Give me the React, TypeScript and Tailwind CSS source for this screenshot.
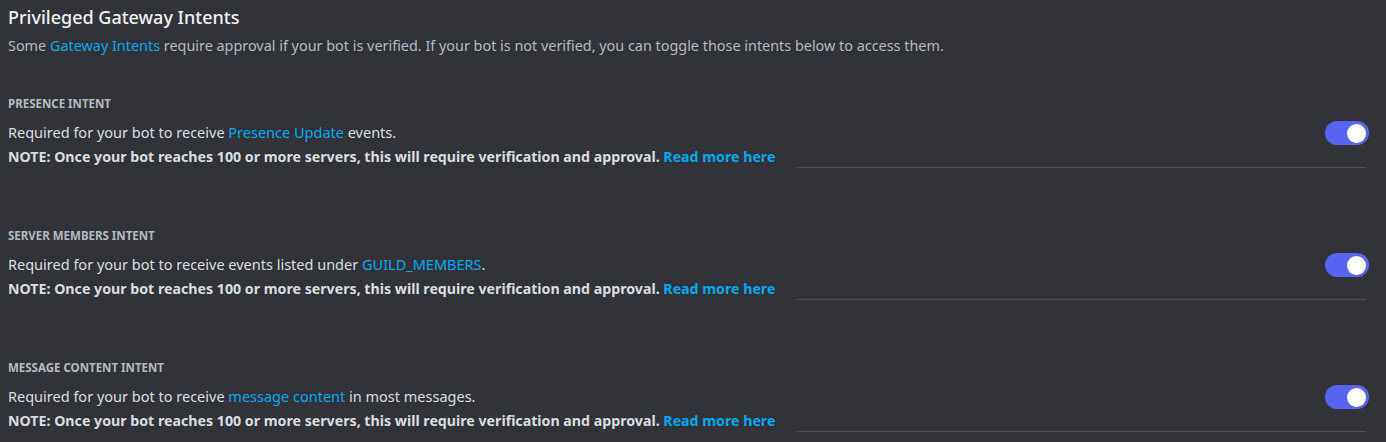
const intents = [
  {
    label: 'PRESENCE INTENT',
    before: 'Required for your bot to receive ',
    link: 'Presence Update',
    after: ' events.',
  },
  {
    label: 'SERVER MEMBERS INTENT',
    before: 'Required for your bot to receive events listed under ',
    link: 'GUILD_MEMBERS',
    after: '.',
  },
  {
    label: 'MESSAGE CONTENT INTENT',
    before: 'Required for your bot to receive ',
    link: 'message content',
    after: ' in most messages.',
  },
];

function Toggle() {
  return (
    <div className="w-[44px] h-6 rounded-full bg-[#5865f2] flex items-center justify-end pr-[3px]">
      <div className="w-[19px] h-[19px] rounded-full bg-white" />
    </div>
  );
}

export default function App() {
  return (
    <div
      className="w-[1386px] h-[442px] bg-[#313338] px-2 pt-[3px] overflow-hidden"
      style={{ fontFamily: '"Noto Sans", sans-serif' }}
    >
      <h2 className="text-[18px] leading-7 font-medium text-[#f2f3f5]">
        Privileged Gateway Intents
      </h2>
      <p className="mt-[5px] text-[14.4px] leading-5 text-[#b5bac1]">
        Some <span className="text-[#00a8fc]">Gateway Intents</span> require approval if your bot is
        verified. If your bot is not verified, you can toggle those intents below to access them.
      </p>

      <div className="mt-[40px] flex flex-col gap-[60px]">
        {intents.map((intent) => (
          <div key={intent.label}>
            <h4 className="text-[11.5px] leading-4 font-bold text-[#b5bac1]">{intent.label}</h4>
            <div className="mt-[10px] flex items-start justify-between">
              <div>
                <p className="text-[14.5px] leading-5 text-[#dbdee1]">
                  {intent.before}
                  <span className="text-[#00a8fc]">{intent.link}</span>
                  {intent.after}
                </p>
                <p className="mt-[5px] text-[14.2px] leading-5 font-bold text-[#dbdee1]">
                  NOTE: Once your bot reaches 100 or more servers, this will require verification and
                  approval. <span className="text-[#00a8fc]">Read more here</span>
                </p>
              </div>
              <div className="-mt-px pr-[9px]">
                <Toggle />
              </div>
            </div>
            <div className="ml-[789px] mr-[12px] h-px bg-[#4e5058]" />
          </div>
        ))}
      </div>
    </div>
  );
}
